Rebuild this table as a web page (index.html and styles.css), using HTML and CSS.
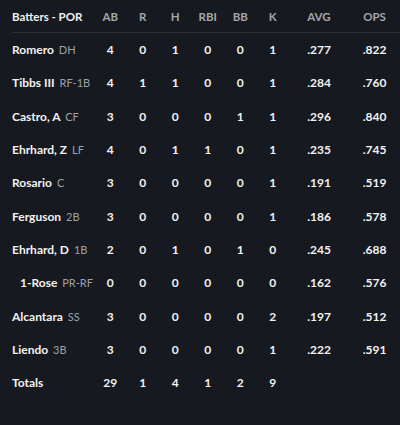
FILE: index.html
```html
<!DOCTYPE html>
<html>
<head>
<meta charset="utf-8">
<link rel="stylesheet" href="styles.css">
</head>
<body>
<div class="box">
  <div class="row head">
    <div class="name">Batters - POR</div>
    <div>AB</div><div>R</div><div>H</div><div>RBI</div><div>BB</div><div>K</div><div>AVG</div><div>OPS</div>
  </div>
  <div class="row"><div class="name">Romero <span class="pos">DH</span></div><div>4</div><div>0</div><div>1</div><div>0</div><div>0</div><div>1</div><div>.277</div><div>.822</div></div>
  <div class="row"><div class="name">Tibbs III <span class="pos">RF-1B</span></div><div>4</div><div>1</div><div>1</div><div>0</div><div>0</div><div>1</div><div>.284</div><div>.760</div></div>
  <div class="row"><div class="name">Castro, A <span class="pos">CF</span></div><div>3</div><div>0</div><div>0</div><div>0</div><div>1</div><div>1</div><div>.296</div><div>.840</div></div>
  <div class="row"><div class="name">Ehrhard, Z <span class="pos">LF</span></div><div>4</div><div>0</div><div>1</div><div>1</div><div>0</div><div>1</div><div>.235</div><div>.745</div></div>
  <div class="row"><div class="name">Rosario <span class="pos">C</span></div><div>3</div><div>0</div><div>0</div><div>0</div><div>0</div><div>1</div><div>.191</div><div>.519</div></div>
  <div class="row"><div class="name">Ferguson <span class="pos">2B</span></div><div>3</div><div>0</div><div>0</div><div>0</div><div>0</div><div>1</div><div>.186</div><div>.578</div></div>
  <div class="row"><div class="name">Ehrhard, D <span class="pos">1B</span></div><div>2</div><div>0</div><div>1</div><div>0</div><div>1</div><div>0</div><div>.245</div><div>.688</div></div>
  <div class="row"><div class="name sub">1-Rose <span class="pos">PR-RF</span></div><div>0</div><div>0</div><div>0</div><div>0</div><div>0</div><div>0</div><div>.162</div><div>.576</div></div>
  <div class="row"><div class="name">Alcantara <span class="pos">SS</span></div><div>3</div><div>0</div><div>0</div><div>0</div><div>0</div><div>2</div><div>.197</div><div>.512</div></div>
  <div class="row"><div class="name">Liendo <span class="pos">3B</span></div><div>3</div><div>0</div><div>0</div><div>0</div><div>0</div><div>1</div><div>.222</div><div>.591</div></div>
  <div class="row"><div class="name">Totals</div><div>29</div><div>1</div><div>4</div><div>1</div><div>2</div><div>9</div><div></div><div></div></div>
</div>
</body>
</html>
```
FILE: styles.css
```css
html, body {
  margin: 0;
  padding: 0;
  background: #16191f;
}
body {
  width: 400px;
  height: 425px;
  overflow: hidden;
  font-family: "Lato", "Liberation Sans", sans-serif;
  font-weight: 700;
  color: #f2f2f2;
}
.box {
  margin-left: 12px;
}
.row {
  display: grid;
  grid-template-columns: 82px repeat(6, 32.5px) 60px 1fr;
  align-items: center;
  height: 33.33px;
  font-size: 12px;
}
.row > div {
  text-align: center;
  white-space: nowrap;
}
.row > .name {
  text-align: left;
}
.name.sub {
  padding-left: 8px;
}
.head {
  height: 32px;
  border-bottom: 1px solid #2a2f38;
  color: #a3a6ab;
  font-size: 11.5px;
}
.head > .name {
  color: #f2f2f2;
}
.pos {
  font-weight: 400;
  color: #9ea1a6;
  font-size: 11px;
  margin-left: 2px;
}
```
